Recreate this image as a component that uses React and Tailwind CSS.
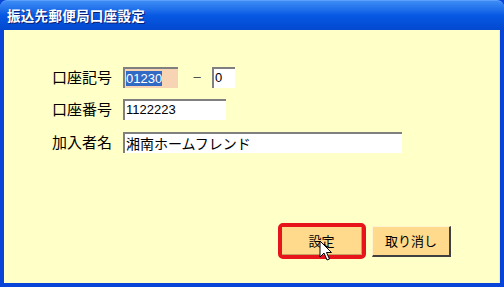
import React from 'react';

const jp = { fontFamily: '"MS UI Gothic", "Noto Sans CJK JP", sans-serif' };
const num = { fontFamily: '"Liberation Sans", "Noto Sans CJK JP", sans-serif' };

function Cursor() {
  return (
    <svg className="absolute left-[319px] top-[240px]" width="14" height="24" viewBox="0 0 14 24">
      <path d="M1 1 L1 17 L5 13 L8 20 L10.5 19 L7.5 12.5 L12.5 12.5 Z" fill="#fff" stroke="#000" strokeWidth="1" strokeLinejoin="miter" />
    </svg>
  );
}

export default function App() {
  return (
    <div className="relative w-[504px] h-[287px] bg-[#0844d8] flex flex-col overflow-hidden" style={jp}>
      <div className="h-[30px] shrink-0 rounded-t-[7px] bg-gradient-to-b from-[#3d8cf5] via-[#0758e3] to-[#0349cf] border-t border-[#5aa0ff] flex items-center pl-[7px]">
        <span className="text-white font-bold text-[13.5px] tracking-[0.3px] [text-shadow:1px_1px_0_#0a1e6e]">振込先郵便局口座設定</span>
      </div>
      <div className="flex-1 mx-[4px] mb-[4px] bg-[#ffffc8] border-r border-[#f0f0b0] flex flex-col pl-[48px] pt-[36px] text-[15px] text-black">
        <div className="flex items-center h-[22px]">
          <span className="w-[71px]">口座記号</span>
          <div className="w-[55px] h-[21px] bg-[#f6d4b4] border-t-2 border-l-2 border-[#808080] flex items-center pl-[1px]" style={num}>
            <span className="bg-[#316ac5] text-white text-[13px] leading-[15px]">01230</span>
          </div>
          <span className="ml-[15px] w-[19px] text-[#505050]">−</span>
          <div className="w-[23px] h-[21px] bg-white border-t-2 border-l-2 border-[#808080] flex items-center pl-[1px] text-[13px]" style={num}>0</div>
        </div>
        <div className="flex items-center h-[22px] mt-[10px]">
          <span className="w-[71px]">口座番号</span>
          <div className="w-[103px] h-[21px] bg-white border-t-2 border-l-2 border-[#808080] flex items-center pl-[1px] text-[13px]" style={num}>1122223</div>
        </div>
        <div className="flex items-center h-[22px] mt-[11px]">
          <span className="w-[71px]">加入者名</span>
          <div className="w-[279px] h-[21px] bg-white border-t-2 border-l-2 border-[#808080] flex items-center pl-[1px] text-[14px]">湘南ホームフレンド</div>
        </div>
        <div className="flex items-center mt-[70px] ml-[226px] text-[13px]">
          <div className="w-[88px] h-[36px] border-[4px] border-[#e8141c] rounded-[5px] flex">
            <div className="flex-1 bg-[#ffd98c] border-r border-b border-[#c8a060] flex items-center justify-center">設定</div>
          </div>
          <div className="ml-[6px] w-[79px] h-[31px] bg-[#ffd98c] border-t border-l border-[#fff4d0] border-r-2 border-b-2 border-r-[#404040] border-b-[#404040] flex items-center justify-center">取り消し</div>
        </div>
      </div>
      <Cursor />
    </div>
  );
}
